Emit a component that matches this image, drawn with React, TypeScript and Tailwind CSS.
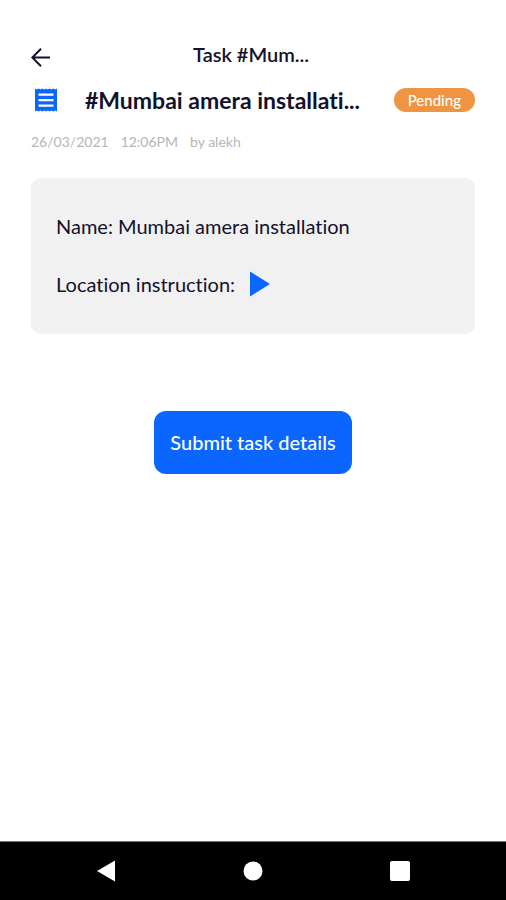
import React, { useState } from 'react';

interface Task {
    title: string;
    name: string;
    date: string;
    time: string;
    author: string;
    status: string;
}

const task: Task = {
    title: 'Mumbai amera installati...',
    name: 'Mumbai amera installation',
    date: '26/03/2021',
    time: '12:06PM',
    author: 'alekh',
    status: 'Pending',
};

const BackIcon = () => (
    <svg width="20" height="20" viewBox="0 0 20 20" fill="none" stroke="currentColor" strokeWidth="2">
        <path d="M19 9.5H2M10 0.7L1.3 9.5L10 18.3" />
    </svg>
);

const ReceiptIcon = () => (
    <svg width="22" height="24" viewBox="0 0 22 24" className="text-[#0a66ff]" aria-hidden="true">
        <path
            fill="currentColor"
            fillRule="evenodd"
            d="M0 0.5L1.8 1.5L3.7 0.5L5.5 1.5L7.3 0.5L9.2 1.5L11 0.5L12.8 1.5L14.7 0.5L16.5 1.5L18.3 0.5L20.2 1.5L22 0.5V23.5L20.2 22.5L18.3 23.5L16.5 22.5L14.7 23.5L12.8 22.5L11 23.5L9.2 22.5L7.3 23.5L5.5 22.5L3.7 23.5L1.8 22.5L0 23.5ZM3.5 5.4V7.7H18.5V5.4ZM3.5 10.9V13.2H18.5V10.9ZM3.5 16.4V18.7H18.5V16.4Z"
        />
    </svg>
);

const NavBar: React.FC = () => {
    return (
        <nav className="grid h-[59px] grid-cols-3 place-items-center border-t border-[#777777] bg-black px-8 text-white">
            <button type="button" aria-label="Back">
                <svg width="18" height="22" viewBox="0 0 18 22" fill="currentColor">
                    <path d="M18 0.5V21.5L0 11Z" />
                </svg>
            </button>
            <button type="button" aria-label="Home">
                <svg width="20" height="20" viewBox="0 0 20 20" fill="currentColor">
                    <circle cx="10" cy="10" r="9.5" />
                </svg>
            </button>
            <button type="button" aria-label="Recent apps">
                <svg width="20" height="20" viewBox="0 0 20 20" fill="currentColor">
                    <rect width="20" height="20" rx="2" />
                </svg>
            </button>
        </nav>
    );
};

const App: React.FC = () => {
    const [status, setStatus] = useState<string>(task.status);

    const handleSubmit = () => {
        setStatus('Submitted');
    };

    return (
        <div className="flex min-h-screen w-full flex-col bg-white font-['Lato',sans-serif] text-[#12122b] [font-variant-ligatures:none]">
            <main className="flex-1 px-[31px] pt-10">
                <header className="grid grid-cols-[20px_1fr_24px] items-start">
                    <button type="button" aria-label="Go back" className="pt-2">
                        <BackIcon />
                    </button>
                    <h1 className="text-center text-[20px] leading-7 font-semibold">Task #Mum...</h1>
                </header>

                <div className="mt-4 flex h-8 items-center">
                    <div className="pl-1">
                        <ReceiptIcon />
                    </div>
                    <h2 className="ml-7 flex-1 truncate text-[23px] leading-8 font-bold">#{task.title}</h2>
                    <span className="rounded-full bg-[#ee9442] px-[14px] text-[15px] leading-6 font-medium text-white">
                        {status}
                    </span>
                </div>

                <div className="mt-4 flex gap-3 text-[14px] leading-5 text-[#b5b5b5]">
                    <span>{task.date}</span>
                    <span>{task.time}</span>
                    <span>by {task.author}</span>
                </div>

                <section className="mt-[26px] rounded-[10px] bg-[#f1f1f1] px-[25px] pt-8 pb-[34px] text-[20px] leading-8">
                    <p>Name: {task.name}</p>
                    <div className="mt-[26px] flex items-center gap-[15px]">
                        <span>Location instruction:</span>
                        <button type="button" aria-label="Play location instruction" className="text-[#0a66ff]">
                            <svg width="20" height="26" viewBox="0 0 20 26" fill="currentColor">
                                <path d="M0 0.5L20 13L0 25.5Z" />
                            </svg>
                        </button>
                    </div>
                </section>

                <div className="mt-[77px] flex justify-center">
                    <button
                        type="button"
                        onClick={handleSubmit}
                        className="rounded-xl bg-[#0a66ff] px-4 pt-[15px] pb-4 text-[20px] leading-8 font-medium text-white"
                    >
                        Submit task details
                    </button>
                </div>
            </main>
            <NavBar />
        </div>
    );
};

export default App;
